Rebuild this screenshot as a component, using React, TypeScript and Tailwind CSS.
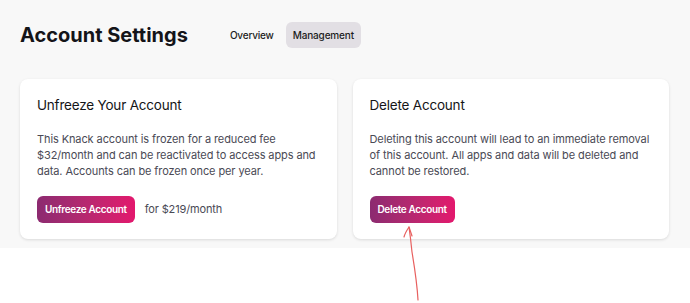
import React from "react";

type CardProps = {
  title: string;
  body: string;
  action: string;
  note?: string;
};

const SettingsCard = ({ title, body, action, note }: CardProps) => {
  return (
    <div className="bg-white rounded-lg shadow-[0_1px_3px_rgba(0,0,0,0.12)] px-[17px] pt-[14px] pb-[16px]">
      <h2 className="text-[13.5px] leading-[24px] tracking-[-0.2px] text-[#151517] font-normal">{title}</h2>
      <p className="mt-[14px] text-[11px] leading-[16px] tracking-[-0.1px] text-[#4a4a55]">{body}</p>
      <div className="mt-[17px] flex items-center gap-[10px]">
        <button className="h-[27px] px-[8px] rounded-md bg-gradient-to-r from-[#8c2a70] to-[#e3176d] text-white text-[10px] tracking-[-0.35px] font-semibold">
          {action}
        </button>
        {note && <span className="text-[11px] tracking-[-0.15px] text-[#4a4a55]">{note}</span>}
      </div>
    </div>
  );
};

export default function App() {
  return (
    <div className="relative w-[690px] h-[303px] bg-white font-['Inter',sans-serif]">
      <div className="bg-[#f8f8f8] px-[20px] pt-[22px] pb-[9px]">
        <div className="flex items-center h-[26px]">
          <h1 className="text-[20px] font-bold text-[#141418] tracking-[0px]">Account Settings</h1>
          <div className="ml-[36px] flex items-center gap-[6px]">
            <span className="px-[6px] h-[26px] flex items-center text-[10px] tracking-[-0.2px] font-medium text-[#1d1d22]">Overview</span>
            <span className="px-[7px] h-[26px] flex items-center rounded-md bg-[#e2dfe4] text-[10px] tracking-[-0.15px] font-medium text-[#1d1d22]">
              Management
            </span>
          </div>
        </div>
        <div className="mt-[31px] grid grid-cols-2 gap-[16px] pr-[1px]">
          <SettingsCard
            title="Unfreeze Your Account"
            body="This Knack account is frozen for a reduced fee $32/month and can be reactivated to access apps and data. Accounts can be frozen once per year."
            action="Unfreeze Account"
            note="for $219/month"
          />
          <SettingsCard
            title="Delete Account"
            body="Deleting this account will lead to an immediate removal of this account. All apps and data will be deleted and cannot be restored."
            action="Delete Account"
          />
        </div>
      </div>
      <svg className="absolute left-[395px] top-[220px]" width="40" height="83" viewBox="0 0 40 83" fill="none">
        <path
          d="M23 80 C22 62 19 44 17 32 C16 22 15 14 14 7"
          stroke="#e8605f"
          strokeWidth="1.2"
          strokeLinecap="round"
        />
        <path
          d="M9 17 C10 13 12 10 14 7 C15 10 16 13 17 16"
          stroke="#e8605f"
          strokeWidth="1.2"
          strokeLinecap="round"
          strokeLinejoin="round"
        />
      </svg>
    </div>
  );
}
